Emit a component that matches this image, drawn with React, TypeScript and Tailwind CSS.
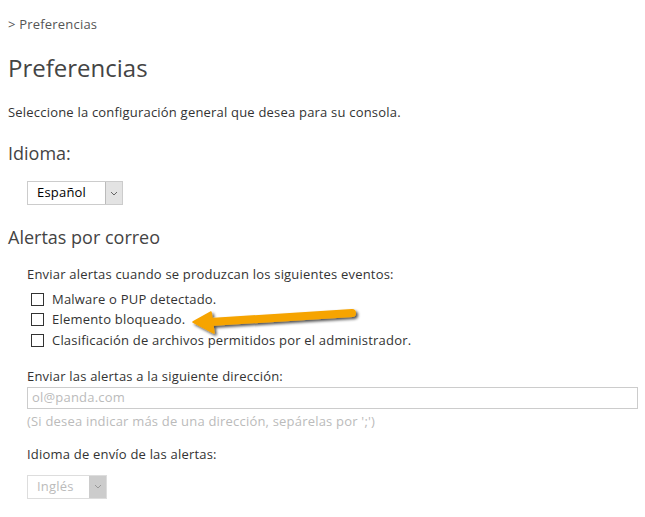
import React from "react";

function Checkbox({ label }: { label: string }) {
  return (
    <label className="flex items-center h-[20.5px]">
      <span className="ml-[4px] w-[13px] h-[13px] border border-[#333] bg-white shrink-0" />
      <span className="ml-[8px] text-[13px] tracking-[0.2px] text-[#333]">{label}</span>
    </label>
  );
}

function Chevron({ color }: { color: string }) {
  return (
    <svg width="8" height="5" viewBox="0 0 8 5">
      <path d="M1 1 L4 4 L7 1" fill="none" stroke={color} strokeWidth="1" />
    </svg>
  );
}

export default function App() {
  return (
    <div
      className="relative w-[645px] h-[517px] bg-white px-[8px] text-[#333] overflow-hidden"
      style={{ fontFamily: '"Open Sans", Arial, sans-serif' }}
    >
      <div className="pt-[15px] text-[13px] tracking-[0.2px] text-[#555] leading-[18px]">&gt; Preferencias</div>
      <h1 className="mt-[20px] text-[24px] leading-[30px] text-[#444] font-normal">Preferencias</h1>
      <p className="mt-[20px] text-[13px] tracking-[0.2px] leading-[18px] text-[#333]">
        Seleccione la configuración general que desea para su consola.
      </p>
      <h2 className="mt-[21px] text-[18px] leading-[22px] text-[#444]">Idioma:</h2>
      <div className="mt-[17px] ml-[19px] flex w-[96px] h-[24px] border border-[#ccc] bg-white">
        <div className="flex-1 flex items-center pl-[9px] text-[13px] tracking-[0.2px] text-black">Español</div>
        <div className="w-[17px] flex items-center justify-center bg-[#e3e3e3] border-l border-[#bbb]">
          <Chevron color="#666" />
        </div>
      </div>
      <h2 className="mt-[21px] text-[18px] leading-[22px] text-[#444]">Alertas por correo</h2>
      <div className="ml-[19px]">
        <p className="mt-[17px] text-[13px] tracking-[0.2px] leading-[18px] text-[#333]">
          Enviar alertas cuando se produzcan los siguientes eventos:
        </p>
        <div className="mt-[6px] flex flex-col">
          <Checkbox label="Malware o PUP detectado." />
          <Checkbox label="Elemento bloqueado." />
          <Checkbox label="Clasificación de archivos permitidos por el administrador." />
        </div>
        <p className="mt-[16px] text-[13px] tracking-[0.2px] leading-[18px] text-[#333]">
          Enviar las alertas a la siguiente dirección:
        </p>
        <div className="mt-[2px] w-[611px] h-[22px] border border-[#ccc] flex items-center pl-[4px] text-[13px] tracking-[0.2px] text-[#bbb]">
          ol@panda.com
        </div>
        <p className="mt-[3px] text-[13px] tracking-[0.2px] leading-[18px] text-[#bbb]">
          (Si desea indicar más de una dirección, sepárelas por ';')
        </p>
        <p className="mt-[15px] text-[13px] tracking-[0.2px] leading-[18px] text-[#333]">
          Idioma de envío de las alertas:
        </p>
        <div className="mt-[12px] flex w-[80px] h-[24px] border border-[#ddd] bg-white">
          <div className="flex-1 flex items-center pl-[9px] text-[13px] tracking-[0.2px] text-[#bbb]">Inglés</div>
          <div className="w-[17px] flex items-center justify-center bg-[#ccc]">
            <Chevron color="#999" />
          </div>
        </div>
      </div>

      <svg
        className="absolute left-0 top-0 pointer-events-none"
        width="645"
        height="517"
        viewBox="0 0 645 517"
      >
        <defs>
          <filter id="sh" x="-20%" y="-50%" width="140%" height="200%">
            <feGaussianBlur in="SourceAlpha" stdDeviation="1.5" />
            <feOffset dx="1.5" dy="2" result="b" />
            <feComponentTransfer>
              <feFuncA type="linear" slope="0.7" />
            </feComponentTransfer>
            <feMerge>
              <feMergeNode />
              <feMergeNode in="SourceGraphic" />
            </feMerge>
          </filter>
        </defs>
        <g filter="url(#sh)">
          <path
            d="M352 313 L210 322"
            stroke="#f6a400"
            strokeWidth="8"
            strokeLinecap="round"
            fill="none"
          />
          <path d="M193 322 L211 312 L214 333 Z" fill="#f6a400" stroke="#f6a400" strokeWidth="1.5" strokeLinejoin="round" />
        </g>
      </svg>
    </div>
  );
}
